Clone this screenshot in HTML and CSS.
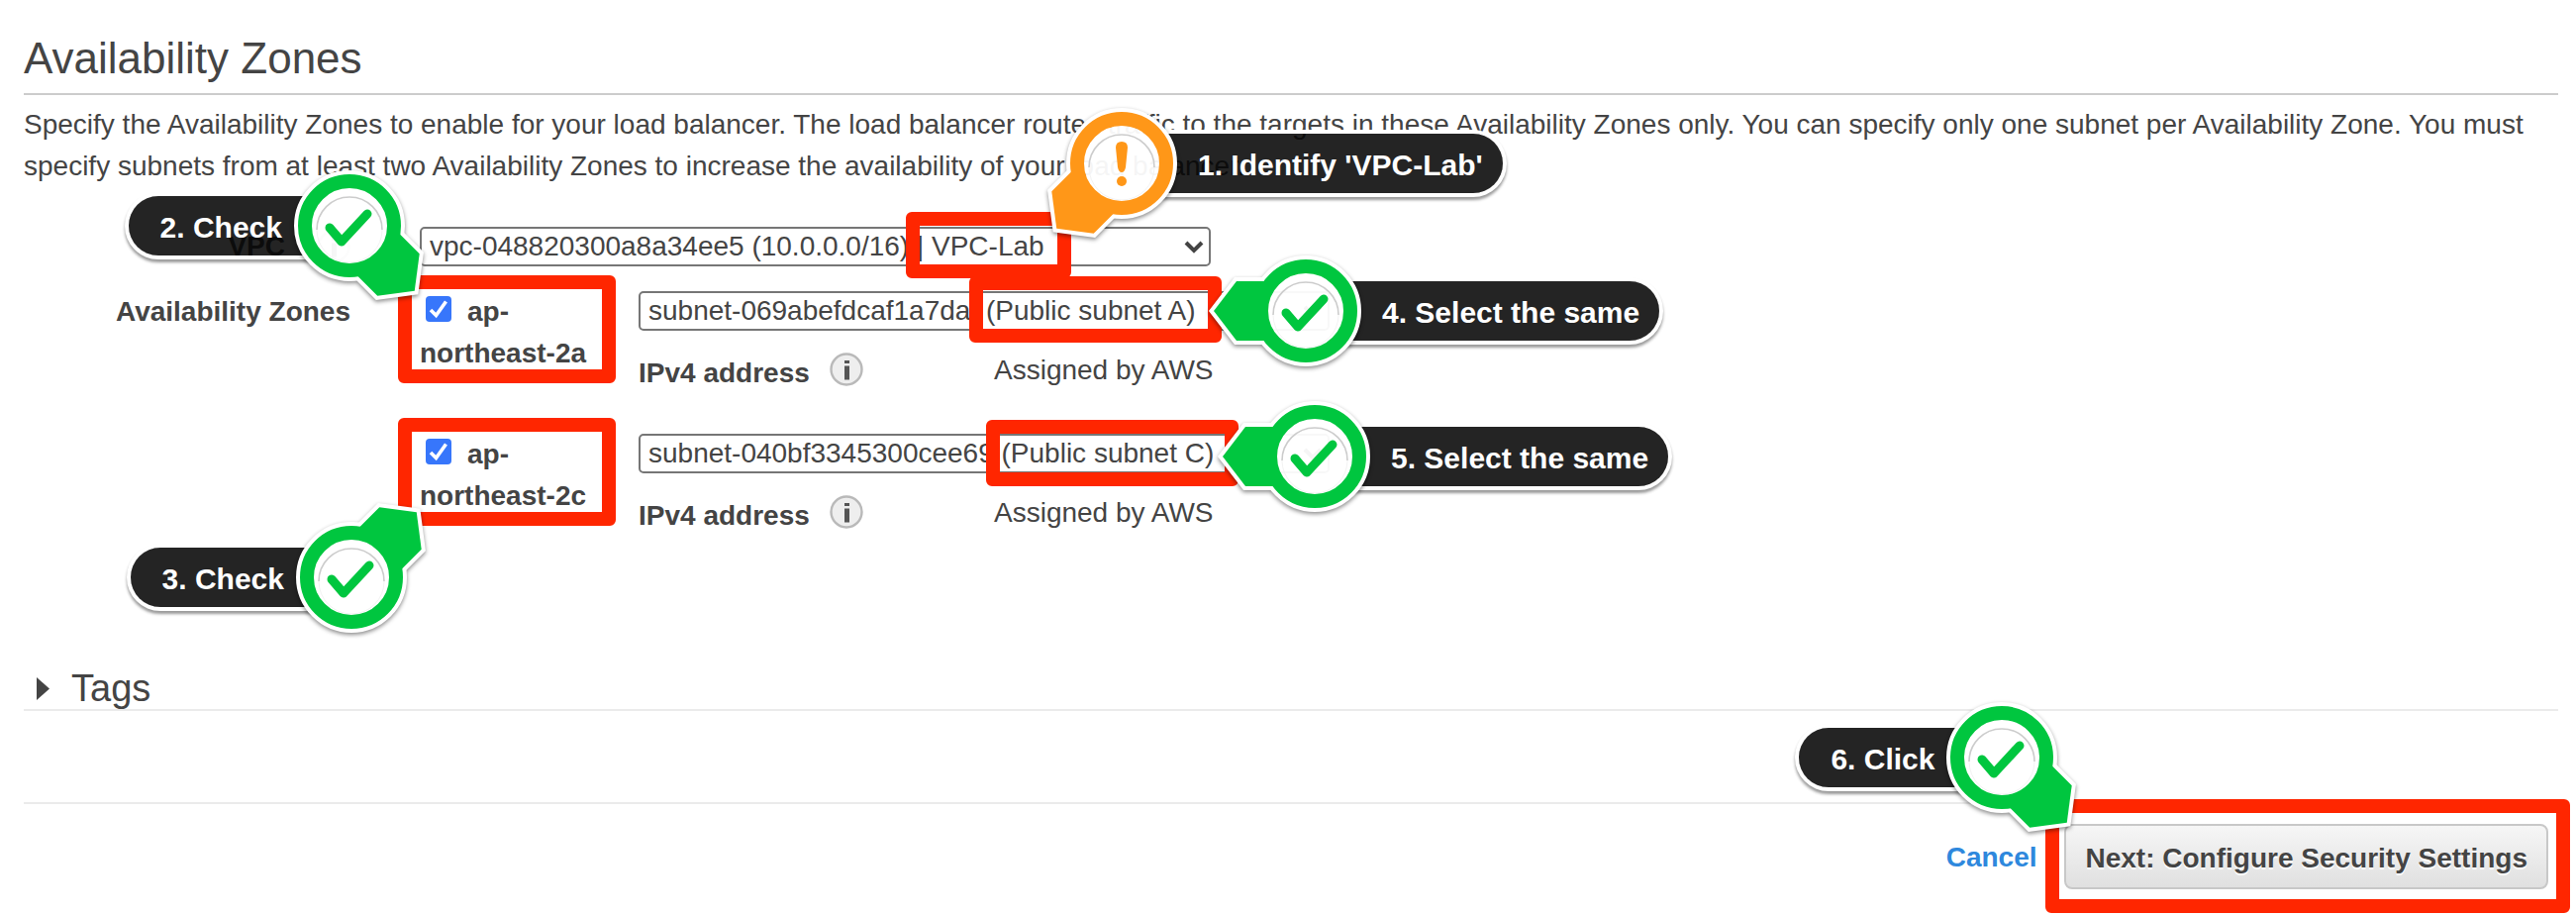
FILE: index.html
```html
<!DOCTYPE html>
<html lang="en">
<head>
<meta charset="utf-8">
<title>Availability Zones</title>
<link rel="stylesheet" href="styles.css">
</head>
<body>
<svg class="defs" aria-hidden="true">
  <defs>
    <symbol id="info" viewBox="0 0 34 34">
      <circle cx="17" cy="17" r="15.5" fill="#eee" stroke="#b9b9b9" stroke-width="2.4"/>
      <path d="M15 8h5v3h-5zM15 13.500h5v14h-5z" fill="#555"/>
    </symbol>
    <g id="pin-outline" fill="none" stroke="#fff" stroke-width="8">
      <circle r="52"/>
      <path d="M93 0 70 -30H43V30H70Z"/>
    </g>
    <g id="pin-shape">
      <circle r="45" fill="none" stroke="currentColor" stroke-width="14"/>
      <path d="M93 0 70 -30H42V30H70Z" fill="currentColor"/>
    </g>
    <g id="pin-disc">
      <circle r="38.5" fill="#fff" fill-opacity=".95"/>
      <path d="M-33 4A33 33 0 1 1 33 4" fill="none" stroke="#ccc" stroke-width="1.6"/>
      <path d="M-33 4A33 33 0 0 0 33 4" fill="none" stroke="#f3f3f3" stroke-width="1"/>
    </g>
    <path id="tick" d="M-20 2 -8 16 18 -12" fill="none" stroke="currentColor" stroke-width="9" stroke-linecap="round" stroke-linejoin="round"/>
  </defs>
</svg>
<main class="page">
  <h1 class="title">Availability Zones</h1>
  <p class="intro">Specify the Availability Zones to enable for your load balancer. The load balancer routes traffic to the targets in these Availability Zones only. You can specify only one subnet per Availability Zone. You must specify subnets from at least two Availability Zones to increase the availability of your load balancer.</p>

  <form class="form">
    <div class="row row-vpc">
      <div class="row-label row-label-info"><label for="vpc">VPC</label><svg class="info"><use href="#info"/></svg></div>
      <div class="vpc-field">
        <select class="select" id="vpc"><option>vpc-048820300a8a34ee5 (10.0.0.0/16) | VPC-Lab</option></select>
        <svg class="chevron" viewBox="0 0 20 14"><path d="M2 3 10 11 18 3"/></svg>
        <span class="mark mark-vpc"></span>
        <div class="callout callout-vpc">
          <span class="pill pill-right">1. Identify 'VPC-Lab'</span>
          <svg class="pin pin-warn" viewBox="-104 -104 208 208">
            <g class="lift"><use href="#pin-outline" transform="rotate(135)"/></g><use href="#pin-disc"/><use href="#pin-shape" transform="rotate(135)"/>
            <path d="M-6 -16Q-6 -22 0 -22T6 -16L4 4Q3 9 0 9T-4 4Z" fill="currentColor"/><circle cy="18" r="5" fill="currentColor"/>
          </svg>
        </div>
      </div>
    </div>

    <div class="row">
      <div class="row-label">Availability Zones</div>
      <div class="zones">
        <div class="zone">
          <label class="zone-name"><input class="check" type="checkbox" checked>ap-northeast-2a</label>
          <div class="subnet">
            <div class="subnet-field">
              <select class="select" aria-label="Subnet for ap-northeast-2a"><option>subnet-069abefdcaf1a7daf (Public subnet A)</option></select>
              <svg class="chevron" viewBox="0 0 20 14"><path d="M2 3 10 11 18 3"/></svg>
              <span class="mark mark-subnet-a"></span>
              <div class="callout callout-subnet-a">
                <span class="pill pill-right">4. Select the same</span>
                <svg class="pin" viewBox="-104 -104 208 208"><g class="lift"><use href="#pin-outline" transform="rotate(180)"/></g><use href="#pin-disc"/><use href="#pin-shape" transform="rotate(180)"/><use href="#tick"/></svg>
              </div>
            </div>
            <div class="address"><b class="address-label">IPv4 address</b><svg class="info"><use href="#info"/></svg><span class="address-value">Assigned by AWS</span></div>
          </div>
          <span class="mark mark-zone"></span>
          <div class="callout callout-zone-a">
            <span class="pill pill-left">2. Check</span>
            <svg class="pin" viewBox="-104 -104 208 208"><g class="lift"><use href="#pin-outline" transform="rotate(45)"/></g><use href="#pin-disc"/><use href="#pin-shape" transform="rotate(45)"/><use href="#tick"/></svg>
          </div>
        </div>

        <div class="zone">
          <label class="zone-name"><input class="check" type="checkbox" checked>ap-northeast-2c</label>
          <div class="subnet">
            <div class="subnet-field">
              <select class="select" aria-label="Subnet for ap-northeast-2c"><option>subnet-040bf3345300cee69 (Public subnet C)</option></select>
              <svg class="chevron" viewBox="0 0 20 14"><path d="M2 3 10 11 18 3"/></svg>
              <span class="mark mark-subnet-c"></span>
              <div class="callout callout-subnet-c">
                <span class="pill pill-right">5. Select the same</span>
                <svg class="pin" viewBox="-104 -104 208 208"><g class="lift"><use href="#pin-outline" transform="rotate(180)"/></g><use href="#pin-disc"/><use href="#pin-shape" transform="rotate(180)"/><use href="#tick"/></svg>
              </div>
            </div>
            <div class="address"><b class="address-label">IPv4 address</b><svg class="info"><use href="#info"/></svg><span class="address-value">Assigned by AWS</span></div>
          </div>
          <span class="mark mark-zone"></span>
          <div class="callout callout-zone-c">
            <span class="pill pill-left">3. Check</span>
            <svg class="pin" viewBox="-104 -104 208 208"><g class="lift"><use href="#pin-outline" transform="rotate(-45)"/></g><use href="#pin-disc"/><use href="#pin-shape" transform="rotate(-45)"/><use href="#tick"/></svg>
          </div>
        </div>
      </div>
    </div>
  </form>

  <h2 class="tags"><svg class="arrow" viewBox="0 0 13 23"><path d="M0 0 13 11.5 0 23Z"/></svg>Tags</h2>

  <footer class="footer">
    <a class="cancel" href="#">Cancel</a>
    <div class="next-wrap">
      <button class="next" type="button">Next: Configure Security Settings</button>
      <span class="mark mark-next"></span>
      <div class="callout callout-next">
        <span class="pill pill-left">6. Click</span>
        <svg class="pin" viewBox="-104 -104 208 208"><g class="lift"><use href="#pin-outline" transform="rotate(45)"/></g><use href="#pin-disc"/><use href="#pin-shape" transform="rotate(45)"/><use href="#tick"/></svg>
      </div>
    </div>
  </footer>
</main>
</body>
</html>
```
FILE: styles.css
```css
* { box-sizing: border-box; }

body {
  margin: 0;
  background: #fff;
  color: #444;
  font: 28px/42px "Liberation Sans", Arial, sans-serif;
}

.defs { position: absolute; width: 0; height: 0; }

.page { padding: 33px 18px 26px 24px; }

.title {
  margin: 0;
  padding-bottom: 9px;
  border-bottom: 2px solid #ccc;
  font-size: 44px;
  line-height: 52px;
  font-weight: 400;
}

.intro { margin: 9px 0 0; }

/* Form rows */
.form {
  display: flex;
  flex-direction: column;
  gap: 26px;
  margin-top: 39px;
}

.row {
  display: grid;
  grid-template-columns: 330px 1fr;
  column-gap: 70px;
}

.row-vpc { align-items: center; height: 40px; }

.row-label { font-weight: 700; text-align: right; }

.row-label-info {
  display: flex;
  align-items: center;
  justify-content: flex-end;
  gap: 32px;
}

.vpc-field { position: relative; width: 799px; }
.subnet-field { position: relative; width: 698px; }

.select {
  display: block;
  width: 100%;
  height: 40px;
  padding: 0 40px 0 8px;
  appearance: none;
  border: 2px solid #767676;
  border-radius: 5px;
  background: #fff;
  color: #444;
  font: inherit;
  line-height: 36px;
}

.chevron {
  position: absolute;
  right: 7px;
  top: 13px;
  width: 20px;
  height: 14px;
  fill: none;
  stroke: #444;
  stroke-width: 4;
  pointer-events: none;
}

.zones { display: flex; flex-direction: column; gap: 40px; }

.zone {
  position: relative;
  display: grid;
  grid-template-columns: 221px 1fr;
}

.zone-name { font-weight: 700; }

.check {
  appearance: none;
  width: 26px;
  height: 26px;
  margin: 0 16px 0 6px;
  border-radius: 4px;
  vertical-align: -1px;
  background: #3776fb url("data:image/svg+xml,%3Csvg xmlns='http://www.w3.org/2000/svg' viewBox='0 0 26 26'%3E%3Cpath d='M5 14 10.500 19.500 20.500 5.500' fill='none' stroke='%23fff' stroke-width='3.600'/%3E%3C/svg%3E");
}

.address {
  display: grid;
  grid-template-columns: 193px 166px 1fr;
  align-items: center;
  margin-top: 22px;
}

.address-value { margin-top: -6px; }

.info { width: 34px; height: 34px; }
.address .info { margin-top: -8px; }

/* Tags */
.tags {
  display: flex;
  align-items: center;
  gap: 22px;
  margin: 133px 0 92px;
  padding: 0 0 1px 13px;
  border-bottom: 2px solid #ebebeb;
  font-size: 38px;
  line-height: 40px;
  font-weight: 400;
}

.arrow { width: 13px; height: 23px; fill: #444; }

/* Footer */
.footer {
  display: flex;
  align-items: center;
  justify-content: flex-end;
  gap: 28px;
  padding: 20px 10px 0 0;
  border-top: 2px solid #ebebeb;
}

.cancel { padding-top: 2px; color: #2e88dd; font-weight: 700; text-decoration: none; }

.next-wrap { position: relative; }

.next {
  display: block;
  height: 66px;
  padding: 3px 19px 0;
  border: 2px solid #c8c8c8;
  border-radius: 8px;
  background: linear-gradient(#f6f6f6, #e0e0e0);
  color: #444;
  font: inherit;
  font-weight: 700;
  text-shadow: 0 2px 0 #fff;
}

/* Red frames */
.mark {
  position: absolute;
  z-index: 1;
  border: 14px solid #ff2600;
  border-radius: 6px;
  pointer-events: none;
}

.mark-vpc { left: 491px; top: -15px; width: 167px; height: 67px; }
.mark-subnet-a { left: 334px; top: -15px; width: 255px; height: 67px; }
.mark-subnet-c { left: 351px; top: -14px; width: 255px; height: 67px; }
.mark-zone { left: -22px; top: -16px; width: 220px; height: 109px; }
.mark-next { inset: -25px -22px -24px -19px; }

/* Callouts: each is anchored at the centre of its pin */
.callout { position: absolute; z-index: 2; width: 0; height: 0; }

.callout-vpc { left: 709px; top: -64px; }
.callout-subnet-a { left: 674px; top: 20px; }
.callout-subnet-c { left: 683px; top: 23px; }
.callout-zone-a { left: -71px; top: -66px; }
.callout-zone-c { left: -69px; top: 145px; }
.callout-next { left: -63px; top: -67px; }

.pill {
  position: absolute;
  top: -30px;
  height: 60px;
  padding-top: 5px;
  background: rgba(4, 4, 4, 0.87);
  box-shadow: 0 0 0 4px #fff, 0 3px 3px 4px rgba(0, 0, 0, 0.4);
  color: #fff;
  font-size: 30px;
  font-weight: 700;
  line-height: 54px;
  white-space: nowrap;
}

.pill-right { left: 44px; padding-left: 33px; padding-right: 20px; border-radius: 0 30px 30px 0; }
.pill-left { right: 44px; padding-left: 32px; padding-right: 24px; border-radius: 30px 0 0 30px; }

.pin {
  position: absolute;
  left: -104px;
  top: -104px;
  width: 208px;
  height: 208px;
  color: #00c63f;
}

.lift { filter: drop-shadow(0 2px 2px rgba(0, 0, 0, 0.45)); }

.pin-warn { color: #ff9718; }
```
